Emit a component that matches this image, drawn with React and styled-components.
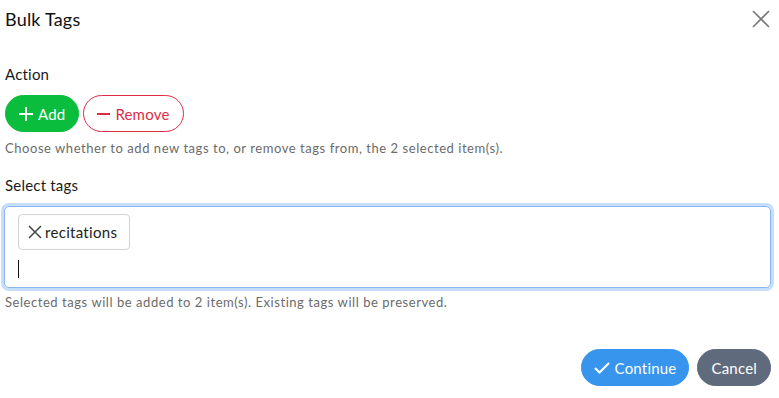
import styled, { createGlobalStyle } from 'styled-components';

const GlobalStyle = createGlobalStyle`
    html, body {
        margin: 0;
        padding: 0;
        background: #fff;
        font-family: 'Lato', 'Noto Sans', sans-serif;
        color: #1d1d1f;
    }
`;

const Dialog = styled.div`
    width: 779px;
    height: 398px;
    box-sizing: border-box;
    padding: 6px 8px 0 5px;
    display: flex;
    flex-direction: column;
`;

const Header = styled.div`
    display: flex;
    justify-content: space-between;
    align-items: center;
    height: 26px;
`;

const Title = styled.h2`
    margin: 0;
    font-size: 18px;
    font-weight: 400;
    color: #111;
    letter-spacing: 0.2px;
`;

const CloseButton = styled.button`
    border: none;
    background: none;
    padding: 0;
    margin-right: 1px;
    display: flex;
    color: #777;
    cursor: pointer;
`;

const Label = styled.div`
    font-size: 15px;
    color: #1a1a1a;
    margin-top: ${(p) => p.top}px;
    letter-spacing: 0.2px;
`;

const ButtonRow = styled.div`
    display: flex;
    gap: 4px;
    margin-top: 12px;
`;

const Pill = styled.button`
    display: inline-flex;
    align-items: center;
    gap: 5px;
    height: 37px;
    box-sizing: border-box;
    padding: 0 ${(p) => p.px || 13}px;
    border-radius: 19px;
    font-family: inherit;
    font-size: 15px;
    letter-spacing: 0.2px;
    cursor: pointer;
    border: 1px solid ${(p) => p.border};
    background: ${(p) => p.bg};
    color: ${(p) => p.fg};
`;

const Hint = styled.div`
    font-size: 13px;
    color: #6b6b6b;
    margin-top: ${(p) => p.top}px;
    letter-spacing: 0.55px;
`;

const TagBox = styled.div`
    margin-top: 12px;
    margin-left: -1px;
    height: 82px;
    box-sizing: border-box;
    border: 1px solid #8ab6f3;
    border-radius: 5px;
    box-shadow: 0 0 0 3px #c6ddfb;
    padding: 7px 13px;
    display: flex;
    flex-direction: column;
    align-items: flex-start;
`;

const Chip = styled.span`
    display: inline-flex;
    align-items: center;
    gap: 3px;
    height: 36px;
    box-sizing: border-box;
    padding: 0 12px 0 9px;
    border: 1px solid #d3d3d3;
    border-radius: 4px;
    font-size: 15px;
    letter-spacing: 0.3px;
    color: #222;
`;

const Caret = styled.span`
    display: block;
    width: 1px;
    height: 18px;
    background: #111;
    margin-top: 10px;
`;

const Footer = styled.div`
    margin-top: auto;
    margin-bottom: 12px;
    display: flex;
    justify-content: flex-end;
    gap: 8px;
`;

export default function App() {
    return (
        <>
            <GlobalStyle />
            <Dialog>
                <Header>
                    <Title>Bulk Tags</Title>
                    <CloseButton aria-label="Close">
                        <svg width="18" height="18" viewBox="0 0 18 18" fill="none" stroke="currentColor" strokeWidth="1.6">
                            <path d="M1 1L17 17M17 1L1 17" />
                        </svg>
                    </CloseButton>
                </Header>

                <Label top={33}>Action</Label>
                <ButtonRow>
                    <Pill bg="#0bbd3c" fg="#fff" border="#0bbd3c">
                        <svg width="14" height="14" viewBox="0 0 14 14" stroke="currentColor" strokeWidth="2">
                            <path d="M7 0V14M0 7H14" />
                        </svg>
                        Add
                    </Pill>
                    <Pill bg="#fff" fg="#dd2d44" border="#dd2d44" px={13}>
                        <svg width="13" height="14" viewBox="0 0 13 14" stroke="currentColor" strokeWidth="2">
                            <path d="M0 7H13" />
                        </svg>
                        Remove
                    </Pill>
                </ButtonRow>
                <Hint top={8}>Choose whether to add new tags to, or remove tags from, the 2 selected item(s).</Hint>

                <Label top={20}>Select tags</Label>
                <TagBox>
                    <Chip>
                        <svg width="14" height="14" viewBox="0 0 14 14" stroke="#444" strokeWidth="1.5">
                            <path d="M1 1L13 13M13 1L1 13" />
                        </svg>
                        recitations
                    </Chip>
                    <Caret />
                </TagBox>
                <Hint top={6}>Selected tags will be added to 2 item(s). Existing tags will be preserved.</Hint>

                <Footer>
                    <Pill bg="#3795ed" fg="#fff" border="#3795ed" px={12}>
                        <svg width="16" height="12" viewBox="0 0 16 12" fill="none" stroke="currentColor" strokeWidth="2">
                            <path d="M1 6L5.5 10.5L15 1" />
                        </svg>
                        Continue
                    </Pill>
                    <Pill bg="#5f6b7d" fg="#fff" border="#5f6b7d" px={13}>
                        Cancel
                    </Pill>
                </Footer>
            </Dialog>
        </>
    );
}
